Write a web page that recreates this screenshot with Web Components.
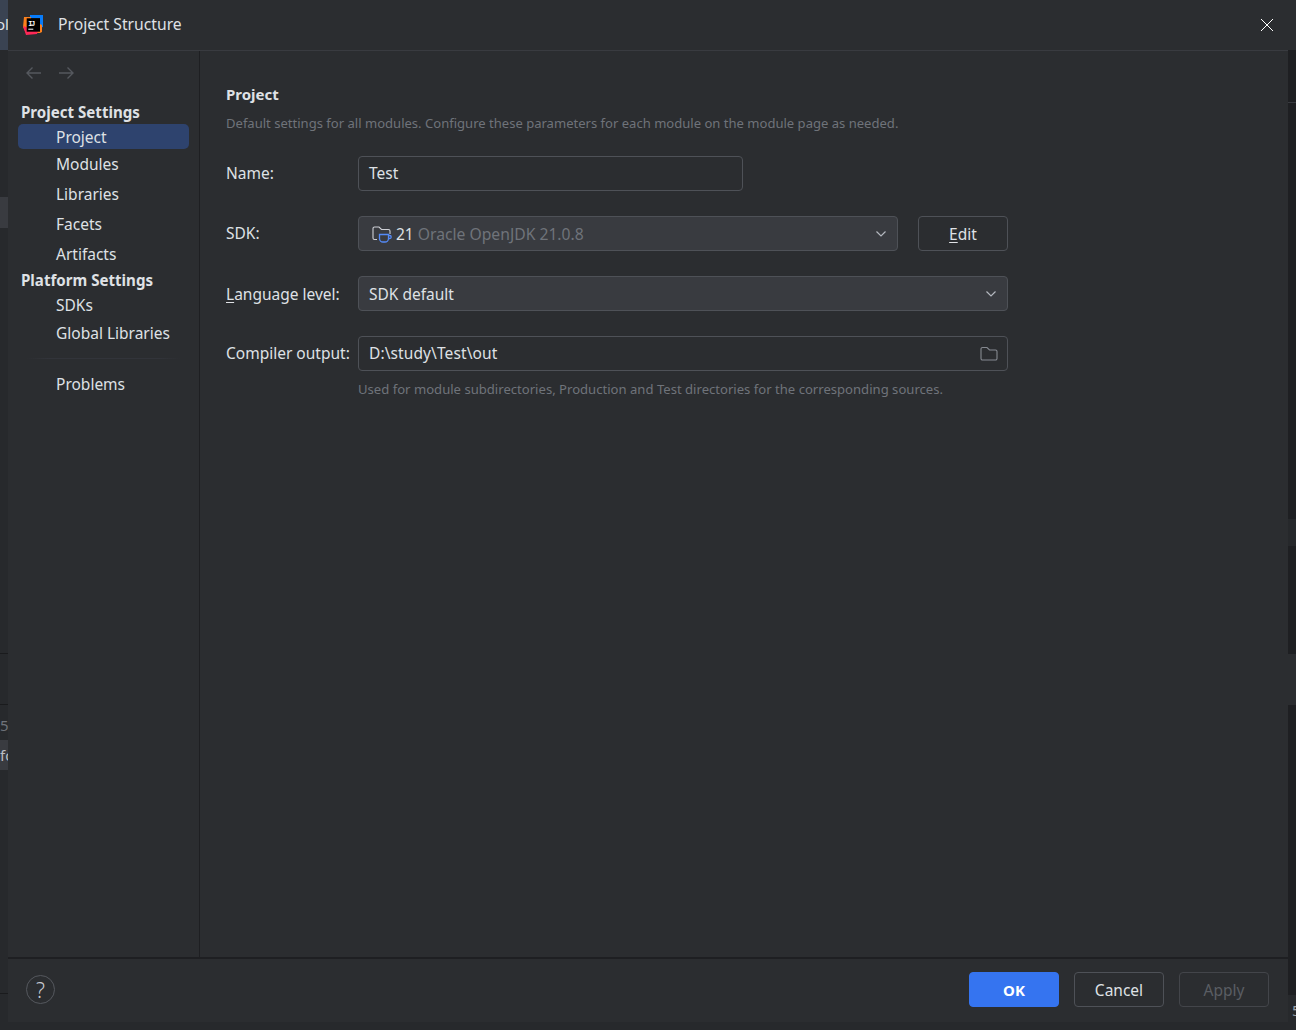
<!DOCTYPE html>
<html>
<head>
<meta charset="utf-8">
<title>Project Structure</title>
<style>
html, body { margin: 0; padding: 0; height: 100%; background: #27292c; overflow: hidden; }
body { font-family: "Noto Sans", "Open Sans", sans-serif; color: #dfe1e5; font-size: 15.5px; }
</style>
</head>
<body>
<ide-backdrop></ide-backdrop>
<ij-dialog heading="Project Structure">
  <ij-nav slot="nav">
    <ij-nav-head style="height:24px">Project Settings</ij-nav-head>
    <ij-nav-item selected style="height:25px">Project</ij-nav-item>
    <ij-nav-item>Modules</ij-nav-item>
    <ij-nav-item>Libraries</ij-nav-item>
    <ij-nav-item>Facets</ij-nav-item>
    <ij-nav-item>Artifacts</ij-nav-item>
    <ij-nav-head style="height:22px">Platform Settings</ij-nav-head>
    <ij-nav-item style="height:27px">SDKs</ij-nav-item>
    <ij-nav-item>Global Libraries</ij-nav-item>
    <ij-nav-sep></ij-nav-sep>
    <ij-nav-item>Problems</ij-nav-item>
  </ij-nav>
  <ij-project-form></ij-project-form>
</ij-dialog>

<script>
class IdeBackdrop extends HTMLElement {
  constructor() {
    super()
    this.attachShadow({ mode: 'open' }).innerHTML = `
    <style>
      :host { position: absolute; inset: 0; display: block; background: #27292c; overflow: hidden; font-size: 15px; color: #9da0a8; }
      .a { position: absolute; }
    </style>
    <div class="a" style="left:0;top:0;width:8px;height:50px;background:#3a4352"></div>
    <div class="a" style="left:-4px;top:14px;color:#dfe1e5">ol</div>
    <div class="a" style="left:0;top:197px;width:8px;height:31px;background:#393b40"></div>
    <div class="a" style="left:0;top:653px;width:8px;height:1px;background:#1a1b1d"></div>
    <div class="a" style="left:0;top:704px;width:8px;height:1px;background:#1a1b1d"></div>
    <div class="a" style="left:0;top:715px;color:#6f737a">5</div>
    <div class="a" style="left:0;top:740px;width:8px;height:30px;background:#393b40"></div>
    <div class="a" style="left:0;top:745px;width:8px;overflow:hidden;color:#bcbec4">fo</div>
    <div class="a" style="left:0;top:993px;width:8px;height:1px;background:#1a1b1d"></div>

    <div class="a" style="left:1288px;top:0;width:8px;height:50px;background:#2b2d30"></div>
    <div class="a" style="left:1288px;top:50px;width:8px;height:945px;background:#1e1f22"></div>
    <div class="a" style="left:1288px;top:102px;width:8px;height:1px;background:#393b40"></div>
    <div class="a" style="left:1288px;top:519px;width:8px;height:27px;background:#26282b"></div>
    <div class="a" style="left:1288px;top:654px;width:8px;height:51px;background:#2b2d30"></div>
    <div class="a" style="left:1287px;top:1005px;width:1px;height:17px;background:#4e5157"></div>
    <div class="a" style="left:1292px;top:1000px;color:#9da0a8">5</div>`
  }
}
customElements.define('ide-backdrop', IdeBackdrop)

class IjDialog extends HTMLElement {
  constructor() {
    super()
    const heading = this.getAttribute('heading')
    this.attachShadow({ mode: 'open' }).innerHTML = `
    <style>
      :host { position: absolute; left: 8px; top: 0; width: 1280px; height: 1022px; background: #2b2d30; display: flex; flex-direction: column; }
      header { height: 50px; flex: none; display: flex; align-items: center; padding: 0 14px 0 15px; border-bottom: 1px solid #393b40; }
      h1 { margin: 0 0 2px 15px; font: inherit; font-size: 15.7px; color: #dfe1e5; flex: 1; }
      .body { flex: 1; display: flex; min-height: 0; }
      .side { flex: none; border-right: 1px solid #1e1f22; box-sizing: border-box; width: 192px; padding: 0 10px; }
      .hist { height: 49px; box-sizing: border-box; padding: 0 0 6px 8px; display: flex; align-items: center; gap: 18px; }
      footer { height: 61px; flex: none; border-top: 2px solid #1e1f22; display: flex; align-items: center; padding: 0 19px 2px 18px; gap: 15px; }
      .help { width: 29px; height: 29px; border: 1px solid #55585e; border-radius: 50%; box-sizing: border-box; color: #c8cad0; display: flex; align-items: center; justify-content: center; font-size: 21px; font-weight: 300; margin-right: auto; }
      svg { display: block; flex: none; }
      svg text { font-family: "Liberation Mono", monospace; font-weight: 700; font-size: 7px; fill: #fff; }
    </style>
    <header>
      <svg width="20" height="20" viewBox="0 0 20 20">
        <path d="M7 0h13v12l-3 1V3H7z" fill="#087cfa"/>
        <path d="M1 2h7v3l11 5v7l-2 1H3l-3-6z" fill="#fc801d"/>
        <path d="M0 11l15 5-1 3-11 1z" fill="#fe2857"/>
        <rect x="3.700" y="3.300" width="13.300" height="13.400" fill="#000"/>
        <text x="5.200" y="10.500" textLength="7">IJ</text>
        <rect x="5.300" y="13.700" width="5" height="1" fill="#fff"/>
      </svg>
      <h1>${heading}</h1>
      <svg width="14" height="14" viewBox="0 0 14 14"><path d="M1 1l12 12M13 1L1 13" stroke="#ffffff" stroke-width="1"/></svg>
    </header>
    <div class="body">
      <div class="side">
        <div class="hist">
          <svg width="15" height="12" viewBox="0 0 15 12"><path d="M1 6h14M6.500 .5L1 6l5.500 5.500" fill="none" stroke="#55585e" stroke-width="1.400"/></svg>
          <svg width="15" height="12" viewBox="0 0 15 12"><path d="M0 6h14M8.500 .5L14 6l-5.500 5.500" fill="none" stroke="#55585e" stroke-width="1.400"/></svg>
        </div>
        <slot name="nav"></slot>
      </div>
      <slot></slot>
    </div>
    <footer>
      <div class="help">?</div>
      <ij-button primary>OK</ij-button>
      <ij-button>Cancel</ij-button>
      <ij-button disabled>Apply</ij-button>
    </footer>`
  }
}
customElements.define('ij-dialog', IjDialog)

class IjNav extends HTMLElement {
  constructor() {
    super()
    this.attachShadow({ mode: 'open' }).innerHTML = `
    <style>:host { display: block; }</style><slot></slot>`
  }
}
customElements.define('ij-nav', IjNav)

class IjNavHead extends HTMLElement {
  constructor() {
    super()
    this.attachShadow({ mode: 'open' }).innerHTML = `
    <style>
      :host { display: flex; align-items: center; padding-left: 3px; font-weight: 700; font-size: 15.1px; color: #dfe1e5; }
    </style><slot></slot>`
  }
}
customElements.define('ij-nav-head', IjNavHead)

class IjNavItem extends HTMLElement {
  constructor() {
    super()
    this.attachShadow({ mode: 'open' }).innerHTML = `
    <style>
      :host { display: flex; align-items: center; height: 30px; padding-left: 38px; font-size: 15.5px; color: #dfe1e5; border-radius: 5px; }
      :host([selected]) { background: #2e436e; }
    </style><slot></slot>`
  }
}
customElements.define('ij-nav-item', IjNavItem)

class IjNavSep extends HTMLElement {
  constructor() {
    super()
    this.attachShadow({ mode: 'open' }).innerHTML = `
    <style>
      :host { display: block; height: 21px; box-sizing: border-box; padding: 10px 8px 0; }
      div { height: 1px; background: linear-gradient(90deg, transparent, #32343a 15%, #32343a 85%, transparent); }
    </style><div></div>`
  }
}
customElements.define('ij-nav-sep', IjNavSep)

class IjField extends HTMLElement {
  constructor() {
    super()
    this.attachShadow({ mode: 'open' }).innerHTML = `
    <style>
      :host { display: flex; align-items: center; height: 35px; box-sizing: border-box; border: 1px solid #4e5157; border-radius: 4px; padding: 0 10px; color: #dfe1e5; font-size: 15.5px; gap: 4px; }
      :host([combo]) { background: #393b40; }
      .txt { flex: 1; white-space: nowrap; display: flex; align-items: center; margin-top: -1px; }
      :host([combo]) .txt { margin-top: 1px; }
    </style>
    <div class="txt"><slot></slot></div>
    <slot name="end"></slot>`
  }
}
customElements.define('ij-field', IjField)

class IjButton extends HTMLElement {
  constructor() {
    super()
    this.attachShadow({ mode: 'open' }).innerHTML = `
    <style>
      :host { display: flex; align-items: center; justify-content: center; width: 90px; height: 35px; box-sizing: border-box; border: 1px solid #4e5157; border-radius: 4px; font-size: 15.500px; color: #dfe1e5; }
      :host([primary]) { background: #3574f0; border-color: #3574f0; color: #fff; font-weight: 700; font-size: 15px; }
      :host([disabled]) { border-color: #43454a; color: #5a5d63; }
    </style><slot></slot>`
  }
}
customElements.define('ij-button', IjButton)

class IjProjectForm extends HTMLElement {
  constructor() {
    super()
    const chevron = `<svg slot="end" width="10" height="6" viewBox="0 0 10 6" style="display:block;margin-right:1px"><path d="M.5 .5L5 5 9.500 .5" fill="none" stroke="#b4b8bf" stroke-width="1.200"/></svg>`
    this.attachShadow({ mode: 'open' }).innerHTML = `
    <style>
      :host { flex: 1; display: block; padding: 32px 0 0 26px; }
      h2 { margin: 0; font-size: 15px; font-weight: 700; line-height: 22px; color: #dfe1e5; }
      .desc { margin: 7px 0 0; font-size: 13.050px; line-height: 22px; color: #6f737a; }
      .grid { width: 782px; margin-top: 22px; display: grid; grid-template-columns: 132px 1fr; row-gap: 25px; align-items: center; }
      label { font-size: 15.500px; color: #dfe1e5; white-space: nowrap; margin-top: -2px; }
      label.lang { margin-top: 0; }
      .sdk { display: grid; grid-template-columns: 540px 90px; column-gap: 20px; }
      .name { width: 385px; }
      .path { letter-spacing: .1px; }
      .hint { grid-column: 2; margin-top: -17px; font-size: 13.100px; line-height: 20px; color: #6f737a; }
      .grey { color: #6f737a; margin-left: 4px; font-size: 15.700px; }
      .ico { flex: none; display: block; margin: 0 4px 0 3px; }
      u { text-underline-offset: 2px; }
    </style>
    <h2>Project</h2>
    <p class="desc">Default settings for all modules. Configure these parameters for each module on the module page as needed.</p>
    <div class="grid">
      <label>Name:</label>
      <ij-field class="name">Test</ij-field>
      <label>SDK:</label>
      <div class="sdk">
        <ij-field combo>
          <svg class="ico" width="20" height="17" viewBox="0 0 20 17">
            <path d="M5 13.500H2.500A1.500 1.500 0 0 1 1 12V2.500A1.500 1.500 0 0 1 2.500 1h4.500L9.500 3.500h7A1.500 1.500 0 0 1 18 5v3" fill="none" stroke="#ced0d6" stroke-width="1.100"/>
            <path d="M7.500 8.500h9v4a3.500 3.500 0 0 1-3.500 3.500h-2a3.500 3.500 0 0 1-3.500-3.500zM16.500 9.500h1.200a1.400 1.400 0 0 1 0 3h-1.200" fill="#393b40" stroke="#548af7" stroke-width="1.300"/>
          </svg>
          <span>21</span><span class="grey">Oracle OpenJDK 21.0.8</span>
          ${chevron}
        </ij-field>
        <ij-button><span><u>E</u>dit</span></ij-button>
      </div>
      <label class="lang"><u>L</u>anguage level:</label>
      <ij-field combo>SDK default ${chevron}</ij-field>
      <label>Compiler output:</label>
      <ij-field class="path">D:\\study\\Test\\out
        <svg slot="end" width="18" height="16" viewBox="0 0 18 16" style="display:block;margin-right:-1px"><path d="M1 3a1.500 1.500 0 0 1 1.500-1.500h4.500l2.500 2.500h6a1.500 1.500 0 0 1 1.500 1.500v7a1.500 1.500 0 0 1-1.500 1.500h-13A1.500 1.500 0 0 1 1 12.500z" fill="none" stroke="#868a91" stroke-width="1.100"/></svg>
      </ij-field>
      <div class="hint">Used for module subdirectories, Production and Test directories for the corresponding sources.</div>
    </div>`
  }
}
customElements.define('ij-project-form', IjProjectForm)
</script>
</body>
</html>
